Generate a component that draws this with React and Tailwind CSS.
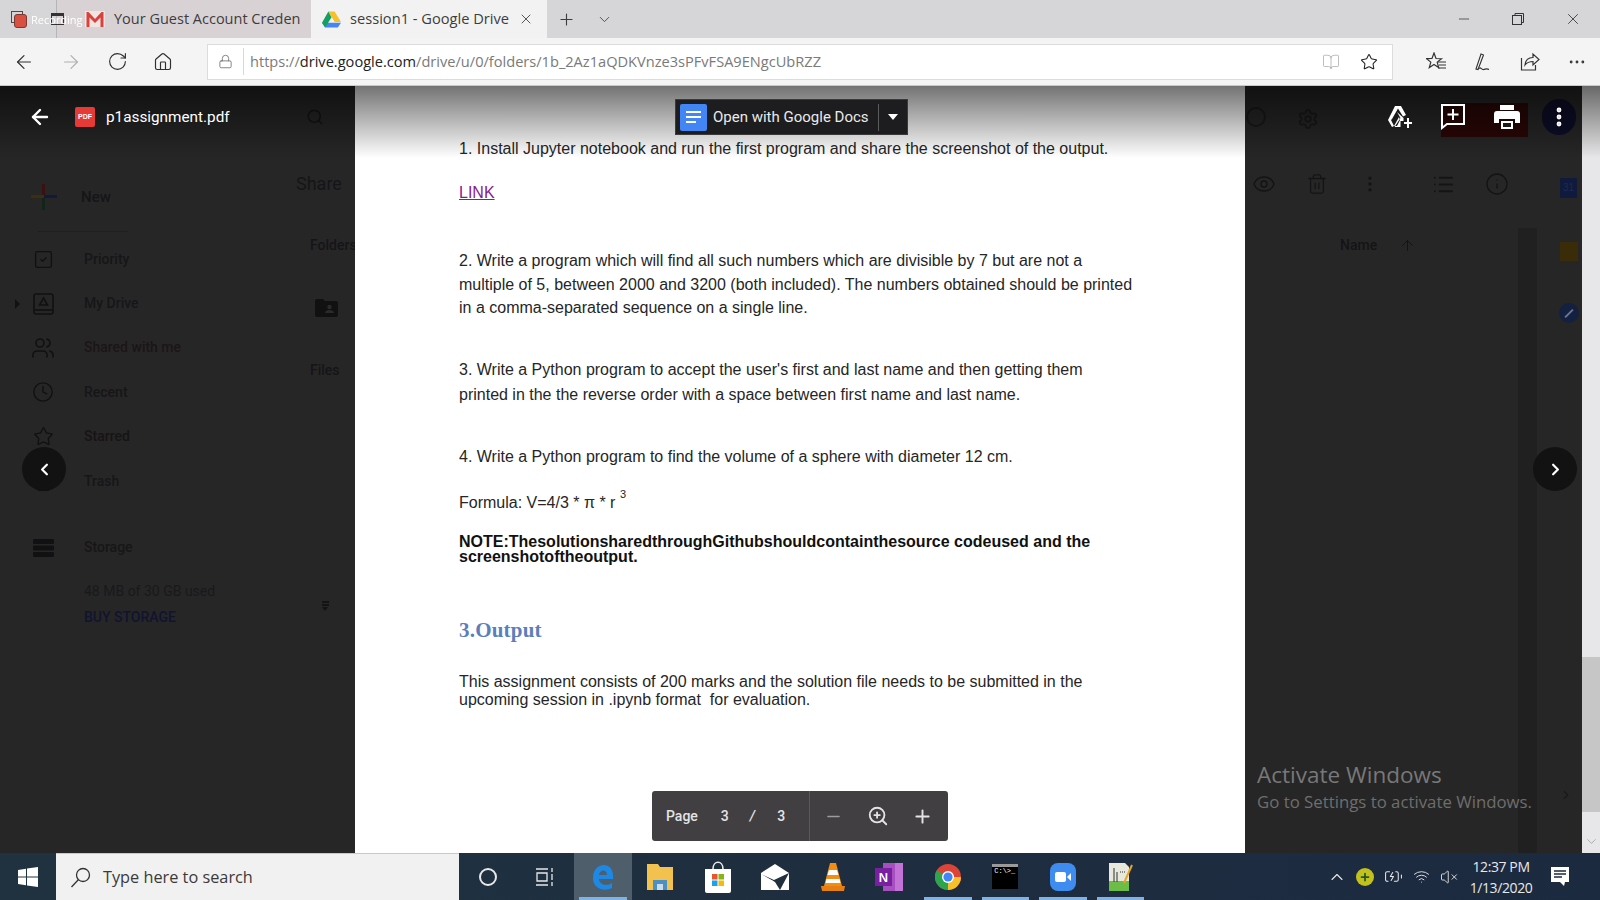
import React from "react";
import {
  ArrowLeft, ArrowRight, RotateCw, Home, Lock, X, Plus, ChevronDown, Minus, Star, BookOpen,
  MoreHorizontal, Eye, Trash2, MoreVertical, List, Info, ArrowUp, Search, Settings, ChevronLeft,
  ChevronRight, ZoomIn, SquareCheck, Users, Clock, ChevronUp, VolumeX, Wifi, BatteryCharging,
} from "lucide-react";

const Drive = ({ size = 20 }) => (
  <svg width={size} height={size} viewBox="0 0 24 22">
    <path d="M8 1h8l8 13h-8z" fill="#f6c028" />
    <path d="M0 15h24l-4 6H4z" fill="#4285f4" />
    <path d="M8 1L0 15l4 6 8-13z" fill="#12a060" />
  </svg>
);

const Gmail = () => (
  <svg width="20" height="16" viewBox="0 0 20 16">
    <rect width="20" height="16" fill="#f3e4e4" />
    <path d="M1.500 16V1h2L10 8l6.500-7h2v15h-3V6.500L10 12 4.500 6.500V16z" fill="#d9423a" />
  </svg>
);

const DocsIcon = () => (
  <div className="w-[27px] h-[27px] bg-[#4285f4] rounded-[2px] flex flex-col justify-center gap-[3px] pl-[6px]">
    <div className="w-[15px] h-[2px] bg-white" />
    <div className="w-[15px] h-[2px] bg-white" />
    <div className="w-[10px] h-[2px] bg-white" />
  </div>
);

const Edge = () => (
  <svg width="24" height="28" viewBox="0 0 24 28">
    <path d="M2 15C2 7 7 2 13 2c6 0 9 5 9 11v3H8c0 5 7 8 13 4v5c-8 4-19 1-19-10zM8 12h8c0-6-7-6-8 0z" fill="#1e88e5" />
  </svg>
);

const Folder = () => (
  <svg width="26" height="30" viewBox="0 0 26 30">
    <path d="M0 2h11l2 3h13v23H0z" fill="#f2c14e" />
    <path d="M6 18h14v10H6z" fill="#4a90c2" />
    <path d="M10 22h6v6h-6z" fill="#c9dceb" />
  </svg>
);

const Store = () => (
  <svg width="28" height="32" viewBox="0 0 28 32">
    <path d="M9 8c0-9 10-9 10 0" fill="none" stroke="#e8e8e8" strokeWidth="1.600" />
    <path d="M1 8h26v22a2 2 0 0 1-2 2H3a2 2 0 0 1-2-2z" fill="#fff" />
    <rect x="8" y="13" width="5.500" height="5.500" fill="#e9552d" />
    <rect x="14.500" y="13" width="5.500" height="5.500" fill="#84b61b" />
    <rect x="8" y="19.500" width="5.500" height="5.500" fill="#1aa3e8" />
    <rect x="14.500" y="19.500" width="5.500" height="5.500" fill="#fab711" />
  </svg>
);

const Mail = () => (
  <svg width="28" height="26" viewBox="0 0 28 26">
    <path d="M0 9L14 0l14 9v17H0z" fill="#fff" />
    <path d="M0 10l13 6 15-7-9 17-5-8z" fill="#20303e" />
    <path d="M0 11l12 6-12 9z" fill="#fff" />
    <path d="M28 11v15h-8z" fill="#fff" />
  </svg>
);

const Vlc = () => (
  <svg width="24" height="30" viewBox="0 0 24 30">
    <path d="M9 1h6l6 23H3z" fill="#f28c12" />
    <path d="M8 8h8l1.500 5h-11zM5.500 17h13l1 4h-15z" fill="#fff" />
    <path d="M0 24h24l-1 5H1z" fill="#e67e10" />
  </svg>
);

const OneNote = () => (
  <svg width="30" height="28" viewBox="0 0 30 28">
    <rect x="8" y="0" width="20" height="28" fill="#a64fbf" />
    <rect x="20" y="0" width="8" height="28" fill="#c373d8" />
    <rect x="0" y="5" width="17" height="18" fill="#7a1fa2" />
    <text x="8.500" y="19" textAnchor="middle" fontSize="13" fontWeight="700" fontFamily="Liberation Sans" fill="#fff">N</text>
  </svg>
);

const Chrome = () => (
  <svg width="26" height="26" viewBox="0 0 26 26">
    <circle cx="13" cy="13" r="13" fill="#dc4437" />
    <path d="M13 13L1.700 6.500A13 13 0 0 0 13 26z" fill="#2da44e" />
    <path d="M13 13h13A13 13 0 0 1 13 26z" fill="#f6c028" />
    <circle cx="13" cy="13" r="6" fill="#fff" />
    <circle cx="13" cy="13" r="4.600" fill="#4285f4" />
  </svg>
);

const Notepad = () => (
  <svg width="26" height="30" viewBox="0 0 26 30">
    <path d="M2 1h16l4 4v24H2z" fill="#e8e8dc" />
    <rect x="2" y="19" width="20" height="10" fill="#6cbd45" />
    <path d="M7 6v14M10 10v10" stroke="#333" strokeWidth="1" />
    <path d="M13 10h5" stroke="#333" strokeWidth="1" strokeDasharray="1 1" />
    <path d="M17 21L25 3" stroke="#e6a529" strokeWidth="2" />
  </svg>
);

const MyDrive = () => (
  <svg width="21" height="22" viewBox="0 0 21 22" fill="none" stroke="currentColor" strokeWidth="1.600">
    <rect x="1" y="1" width="19" height="20" rx="2" />
    <path d="M1 17h19" />
    <path d="M10.500 5l4 7h-8z" />
  </svg>
);

const StorageIcon = () => (
  <svg width="21" height="18" viewBox="0 0 21 18" fill="currentColor">
    <rect width="21" height="5" y="0" rx="1" />
    <rect width="21" height="5" y="6.500" rx="1" />
    <rect width="21" height="5" y="13" rx="1" />
  </svg>
);

const SidebarItem = ({ icon, label, arrow, color = "text-[#161618]" }) => (
  <div className="h-[44.4px] flex items-center relative">
    {arrow && <div className="absolute left-[15px] w-0 h-0 border-y-[5px] border-y-transparent border-l-[5px] border-l-[#121212]" />}
    <div className="w-[84px] pl-[33px] shrink-0 text-[#111113]">{icon}</div>
    <span className={`text-[14px] font-medium font-[Roboto,sans-serif] ${color}`}>{label}</span>
  </div>
);

const TaskIcon = ({ children, active, running }) => (
  <div className={`w-[57.5px] h-full relative flex items-center justify-center shrink-0 ${active ? "bg-[#4e5e6a]" : ""}`}>
    {children}
    {running && <div className="absolute bottom-0 left-[5px] right-[5px] h-[3px] bg-[#7fb3e6]" />}
  </div>
);

export default function App() {
  return (
    <div className="w-[1600px] h-[900px] flex flex-col overflow-hidden relative font-['Liberation_Sans',sans-serif] blur-[0.35px]">
      {/* Tabs */}
      <div className="h-[38px] bg-[#d6d5d8] flex items-stretch shrink-0 font-['Open_Sans',sans-serif] text-[#3d3d3d]">
        <div className="w-[57px] relative flex items-center pl-[11px] border-r border-[#b5b4b7]">
          <div className="relative w-[16px] h-[16px]">
            <div className="absolute left-0 top-0 w-[12px] h-[12px] border border-[#4a4a4a]" />
            <div className="absolute left-[3px] top-[3px] w-[13px] h-[14px] bg-[#d8503f] rounded-[3px] border border-[#7a3a33]" />
          </div>
          <div className="absolute left-[51px] top-[13px] w-[13px] h-[12px] border border-[#333] border-t-[3px]" />
          <span className="absolute left-[31px] top-[12px] text-[11px] text-white whitespace-nowrap z-10">Recording</span>
        </div>
        <div className="w-[254px] flex items-center bg-[#d9d2d4] pl-[28px] gap-[9px]">
          <Gmail />
          <span className="text-[14.5px] whitespace-nowrap">Your Guest Account Creden</span>
        </div>
        <div className="w-[236px] bg-[#f2f2f2] flex items-center pl-[11px]">
          <Drive size={19} />
          <span className="ml-[9px] text-[14.65px] whitespace-nowrap">session1 - Google Drive</span>
          <X size={16} strokeWidth={1.3} className="ml-[9px]" />
        </div>
        <div className="flex items-center pl-[10px] gap-[20px]">
          <Plus size={19} strokeWidth={1.4} />
          <ChevronDown size={17} strokeWidth={1.2} />
        </div>
        <div className="ml-auto flex items-center pr-[18px] gap-[40px]">
          <Minus size={16} strokeWidth={1.2} />
          <svg width="12" height="12" viewBox="0 0 12 12" fill="none" stroke="#333" strokeWidth="1">
            <rect x="0.5" y="2.5" width="9" height="9" />
            <path d="M3 2.500v-2h8.500v9h-2" />
          </svg>
          <X size={18} strokeWidth={1.2} />
        </div>
      </div>

      {/* Toolbar */}
      <div className="h-[48px] bg-[#f4f4f4] flex items-center shrink-0 border-b border-[#c8c8c8] relative">
        <div className="w-[207px] flex items-center pl-[13px] gap-[25px] text-[#2f2f2f]">
          <ArrowLeft size={22} strokeWidth={1.3} />
          <ArrowRight size={22} strokeWidth={1.3} className="text-[#b0b0b0]" />
          <RotateCw size={21} strokeWidth={1.3} />
          <Home size={20} strokeWidth={1.4} />
        </div>
        <div className="w-[1186px] h-[36px] bg-white border border-[#dcdcdc] flex items-center pl-[10px]">
          <Lock size={15} strokeWidth={1.3} className="text-[#6b6b6b]" />
          <div className="w-px h-[27px] bg-[#d8d8d8] ml-[10px]" />
          <span className="ml-[6px] text-[14.6px] text-[#7a7a7a] font-['Open_Sans',sans-serif] whitespace-nowrap">
            https://<span className="text-[#222]">drive.google.com</span>/drive/u/0/folders/1b_2Az1aQDKVnze3sPFvFSA9ENgcUbRZZ
          </span>
          <div className="ml-auto flex items-center gap-[20px] pr-[14px]">
            <BookOpen size={18} strokeWidth={1} className="text-[#a8a8a8]" />
            <Star size={18} strokeWidth={1.4} className="text-[#222]" />
          </div>
        </div>
        <div className="flex items-center pl-[33px] gap-[27px] text-[#333]">
          <svg width="20" height="19" viewBox="0 0 20 19" fill="none" stroke="#333" strokeWidth="1.200">
            <path d="M8 1l2 5.500 5.500.2-4.300 3.400 1.500 5.400L8 12.400l-4.700 3.100 1.500-5.400L.5 6.700 6 6.500z" />
            <path d="M12 10h8M13 13h7M12 16h8" />
          </svg>
          <svg width="20" height="22" viewBox="0 0 20 22" fill="none" stroke="#333" strokeWidth="1.100">
            <path d="M3 18L8 3l2.500 1L5 18.500zM5 18.500c3-4 3 1 6 0s2-1 5 0" />
          </svg>
          <svg width="20" height="19" viewBox="0 0 20 19" fill="none" stroke="#333" strokeWidth="1.200">
            <path d="M1.500 6v12h14v-5" />
            <path d="M5 13c.5-5 4-7.500 8-7.500V2l6 5.500-6 5.500V9.500c-3 0-6 1-8 3.500z" />
          </svg>
          <MoreHorizontal size={20} strokeWidth={1.4} />
        </div>
      </div>

      {/* Main */}
      <div className="flex-1 flex relative min-h-0">
        {/* Drive left, dimmed */}
        <div className="w-[355px] bg-[#262626] shrink-0 flex">
          <div className="w-[296px] shrink-0 flex flex-col">
            <div className="h-[80px] shrink-0" />
            <div className="h-[62px] flex items-center relative shrink-0">
              <div className="relative w-[26px] h-[26px] ml-[31px]">
                <div className="absolute left-[11px] top-0 w-[3px] h-[13px] bg-[#3a1010]" />
                <div className="absolute left-[11px] bottom-0 w-[3px] h-[13px] bg-[#12251a]" />
                <div className="absolute left-0 top-[11px] w-[13px] h-[3px] bg-[#3a300c]" />
                <div className="absolute right-0 top-[11px] w-[13px] h-[3px] bg-[#121a3a]" />
              </div>
              <span className="ml-[24px] text-[15px] font-medium font-[Roboto,sans-serif] text-[#151517]">New</span>
              <div className="absolute left-[38px] bottom-[-4px] w-[90px] h-px bg-[#202020]" />
            </div>
            <div className="h-[9px] shrink-0" />
            <SidebarItem icon={<SquareCheck size={21} strokeWidth={1.5} />} label="Priority" />
            <SidebarItem arrow icon={<MyDrive />} label="My Drive" />
            <SidebarItem icon={<Users size={24} strokeWidth={1.6} className="-ml-[2px]" />} label="Shared with me" color="text-[#1c1516]" />
            <SidebarItem icon={<Clock size={22} strokeWidth={1.5} className="-ml-[1px]" />} label="Recent" />
            <SidebarItem icon={<Star size={21} strokeWidth={1.5} />} label="Starred" color="text-[#171416]" />
            <SidebarItem icon={<Trash2 size={21} strokeWidth={1.5} />} label="Trash" />
            <div className="h-[22px] shrink-0" />
            <SidebarItem icon={<StorageIcon />} label="Storage" />
            <div className="pl-[84px] text-[14px] font-[Roboto,sans-serif] text-[#19191b] mt-[11px] leading-[20px]">48 MB of 30 GB used</div>
            <div className="pl-[84px] text-[14px] font-medium font-[Roboto,sans-serif] text-[#101430] mt-[6px] leading-[20px]">BUY STORAGE</div>
          </div>
          <div className="flex-1 min-w-0 overflow-hidden flex flex-col font-[Roboto,sans-serif] text-[#151517] whitespace-nowrap relative">
            <div className="h-[85px] shrink-0" />
            <div className="text-[18px] leading-[26px]">Share</div>
            <div className="text-[14px] font-medium pl-[14px] mt-[38px] leading-[20px]">Folders</div>
            <div className="pl-[19px] mt-[44px] h-[24px]">
              <svg width="23" height="18" viewBox="0 0 23 18" fill="#111">
                <path d="M0 2a2 2 0 0 1 2-2h6l2 2h11a2 2 0 0 1 2 2v12a2 2 0 0 1-2 2H2a2 2 0 0 1-2-2z" />
                <circle cx="14.500" cy="8" r="2.200" fill="#2b2b2b" />
                <path d="M10 14c0-4 9-4 9 0z" fill="#2b2b2b" />
              </svg>
            </div>
            <div className="text-[14px] font-medium pl-[14px] mt-[37px] leading-[20px]">Files</div>
            <div className="pl-[26px] mt-[221px] text-[#141414]">
              <div className="w-[7px] h-[2px] bg-current mb-[1px]" />
              <div className="w-[7px] h-[2px] bg-current mb-[1px]" />
              <div className="w-0 h-0 border-x-[3.5px] border-x-transparent border-t-[4px] border-t-current" />
            </div>
          </div>
        </div>

        {/* Document */}
        <div className="w-[890px] bg-white shrink-0 pl-[104px] pr-[100px] pt-[53px] text-[16px] text-[#262626]">
          <p className="leading-[20px] whitespace-nowrap">1. Install Jupyter notebook and run the first program and share the screenshot of the output.</p>
          <p className="leading-[20px] mt-[24px] text-[#8a1a92] underline">LINK</p>
          <p className="leading-[23.5px] mt-[46px]">2. Write a program which will find all such numbers which are divisible by 7 but are not a<br />multiple of 5, between 2000 and 3200 (both included). The numbers obtained should be printed<br />in a comma-separated sequence on a single line.</p>
          <p className="leading-[25px] mt-[37px]">3. Write a Python program to accept the user's first and last name and then getting them<br />printed in the the reverse order with a space between first name and last name.</p>
          <p className="leading-[20px] mt-[40px]">4. Write a Python program to find the volume of a sphere with diameter 12 cm.</p>
          <p className="leading-[20px] mt-[26px] relative">Formula: V=4/3 * π * r<span className="absolute left-[161px] top-[-9px] text-[11px]">3</span></p>
          <p className="leading-[15px] mt-[21px] font-bold text-[#111] whitespace-nowrap">NOTE:ThesolutionsharedthroughGithubshouldcontainthesource codeused and the<br />screenshotoftheoutput.</p>
          <p className="leading-[28px] mt-[52px] text-[21px] font-bold text-[#5b7fbd] font-['Liberation_Serif',serif] tracking-[0.2px]">3.Output</p>
          <p className="leading-[18px] mt-[29px]">This assignment consists of 200 marks and the solution file needs to be submitted in the<br />upcoming session in .ipynb format&nbsp; for evaluation.</p>
        </div>

        {/* Drive right, dimmed */}
        <div className="w-[337px] bg-[#262626] shrink-0 flex flex-col relative font-[Roboto,sans-serif] text-[#141416]">
          <div className="h-[60px] shrink-0" />
          <div className="h-[76px] flex items-center pl-[7px] shrink-0">
            <Eye size={24} strokeWidth={1.4} />
            <Trash2 size={22} strokeWidth={1.4} className="ml-[30px]" />
            <MoreVertical size={20} strokeWidth={2} className="ml-[32px]" />
            <List size={23} strokeWidth={2} className="ml-[52px]" />
            <Info size={24} strokeWidth={1.4} className="ml-[30px]" />
          </div>
          <div className="flex items-center pl-[95px] text-[14px] font-medium mt-[13px]">
            Name <ArrowUp size={17} strokeWidth={1.4} className="ml-[22px]" />
          </div>
          <div className="absolute right-[45px] top-[142px] bottom-0 w-[19px] bg-[#202020]" />
          <ChevronRight size={14} className="absolute right-[9px] top-[702px] text-[#191919]" />
        </div>

        {/* Scrollbar */}
        <div className="w-[18px] shrink-0 bg-[#e7e7e9] flex flex-col items-center">
          <div className="h-[571px] shrink-0" />
          <div className="w-full h-[155px] shrink-0 bg-[#c6c6c6]" />
          <ChevronDown size={15} strokeWidth={1} className="mt-[22px] text-[#8a8a8a]" />
        </div>

        {/* Ghost shapes of the page below */}
        <div className="absolute left-[1441px] top-[17px] w-[87px] h-[34px] bg-[#2a0606]" />
        <div className="absolute left-[1542px] top-[13px] w-[34px] h-[36px] rounded-full bg-[#0d0d28]" />
        <div className="absolute left-[1560px] top-[92px] w-[17px] h-[20px] bg-[#101a3c] text-[#1c2a55] text-[10px] text-center leading-[20px]">31</div>
        <div className="absolute left-[1560px] top-[156px] w-[18px] h-[19px] bg-[#3a2c08]" />
        <div className="absolute left-[1559px] top-[217px] w-[20px] h-[20px] rounded-full bg-[#14203f] flex items-center justify-center">
          <div className="w-[2px] h-[11px] bg-[#6d7590] rotate-45" />
        </div>
        <Search size={18} className="absolute left-[306px] top-[22px] text-[#141414]" />
        <div className="absolute left-[1246px] top-[21px] w-[20px] h-[20px] rounded-full border-2 border-[#191919]" />
        <Settings size={22} className="absolute left-[1297px] top-[22px] text-[#191919]" />

        {/* Dim gradient of the viewer's header */}
        <div className="absolute left-0 right-0 top-0 h-[72px] bg-linear-to-b from-black/55 to-transparent pointer-events-none" />

        {/* Viewer header */}
        <div className="absolute left-[28px] top-[19px] flex items-center text-white">
          <ArrowLeft size={24} strokeWidth={2.4} />
          <div className="ml-[23px] w-[20px] h-[20px] bg-[#e53a35] rounded-[2px] flex items-center justify-center text-[7px] font-bold">PDF</div>
          <span className="ml-[11px] text-[15.3px] font-[Roboto,sans-serif]">p1assignment.pdf</span>
        </div>
        <div className="absolute left-[675px] top-[13px] w-[233px] h-[36px] bg-[#1d1d1f] border border-[#3a3a3a] flex items-center pl-[4px]">
          <DocsIcon />
          <span className="ml-[6px] text-[15px] text-[#eaeaea] font-[Roboto,sans-serif] whitespace-nowrap">Open with Google Docs</span>
          <div className="ml-[9px] w-px h-[27px] bg-[#5b5b5b]" />
          <div className="ml-[9px] w-0 h-0 border-x-[5px] border-x-transparent border-t-[6px] border-t-white" />
        </div>
        <div className="absolute left-[1387px] top-[17px] flex items-center text-white">
          <svg width="26" height="24" viewBox="0 0 26 24" fill="white">
            <path d="M8 1h6l5 9-3 1.500L11 3.500 5 14l-1 1 3 6-2 1-4-7z" />
            <path d="M10 7l3.500 6-6 9h6v-6h3v-3zM7 21l5-9 1 3-3 6z" />
            <path d="M20 13h2v4h3v2h-3v4h-2v-4h-3v-2h3z" />
          </svg>
          <svg width="26" height="27" viewBox="0 0 26 27" fill="none" stroke="white" strokeWidth="2" className="ml-[27px]">
            <path d="M2 2h22v19H7l-5 4z" />
            <path d="M13 6v11M7.500 11.500h11" />
          </svg>
          <svg width="26" height="24" viewBox="0 0 26 24" fill="white" className="ml-[28px]">
            <path d="M6 0h14v5H6z" />
            <path d="M3 6h20a3 3 0 0 1 3 3v9h-5v-4H5v4H0V9a3 3 0 0 1 3-3z" />
            <path d="M7 16h12v8H7z" />
            <path d="M9 18h8v4H9z" fill="#1a1a1a" />
          </svg>
          <MoreVertical size={24} strokeWidth={2.8} className="ml-[27px]" />
        </div>

        {/* Prev / next */}
        <div className="absolute left-[22px] top-[361px] w-[44px] h-[44px] rounded-full bg-[#121212] flex items-center justify-center text-white">
          <ChevronLeft size={19} strokeWidth={2.8} />
        </div>
        <div className="absolute left-[1533px] top-[361px] w-[44px] h-[44px] rounded-full bg-[#121212] flex items-center justify-center text-white">
          <ChevronRight size={19} strokeWidth={2.8} />
        </div>

        {/* Page control */}
        <div className="absolute left-[652px] top-[705px] w-[296px] h-[50px] bg-[#423f42] rounded-[3px] flex items-center text-[#e4e4e4] font-[Roboto,sans-serif] text-[14px] font-medium">
          <div className="w-[158px] h-full border-r border-[#5c595c] flex items-center pl-[14px]">
            <span>Page</span>
            <span className="ml-[23px]">3</span>
            <span className="ml-[21px] italic">/</span>
            <span className="ml-[22px]">3</span>
          </div>
          <Minus size={19} strokeWidth={2} className="ml-[14px] text-[#9d9b9d]" />
          <ZoomIn size={22} strokeWidth={2} className="ml-[24px]" />
          <Plus size={21} strokeWidth={2.2} className="ml-[23px]" />
        </div>

        {/* Activation watermark */}
        <div className="absolute left-[1257px] top-[673px] text-[#787878] font-['Open_Sans',sans-serif]">
          <div className="text-[22.5px] leading-[32px] whitespace-nowrap">Activate Windows</div>
          <div className="text-[16.8px] leading-[22px] whitespace-nowrap text-[#6e6e6e]">Go to Settings to activate Windows.</div>
        </div>
      </div>

      {/* Taskbar */}
      <div className="h-[47px] shrink-0 bg-linear-to-r from-[#20323f] to-[#1c2a40] flex items-stretch font-['Open_Sans',sans-serif]">
        <div className="w-[56px] flex items-center justify-center">
          <svg width="20" height="20" viewBox="0 0 20 20" fill="white">
            <path d="M0 3l8-1.200V9.500H0zM9 1.600L20 0v9.500H9zM0 10.500h8v7.700L0 17zM9 10.500h11V20L9 18.400z" />
          </svg>
        </div>
        <div className="w-[403px] bg-[#f1f1f1] border-t border-[#c9c9c9] flex items-center pl-[14px] text-[#3a3a3a]">
          <svg width="21" height="21" viewBox="0 0 21 21" fill="none" stroke="#333" strokeWidth="1.300">
            <circle cx="13" cy="8" r="6.500" />
            <path d="M8.500 12.500L1.500 20" />
          </svg>
          <span className="ml-[12px] text-[16.3px]">Type here to search</span>
        </div>
        <div className="flex items-stretch">
          <TaskIcon><div className="w-[18px] h-[18px] rounded-full border-[2.5px] border-[#e8e8e8]" /></TaskIcon>
          <TaskIcon>
            <svg width="20" height="20" viewBox="0 0 20 20" fill="none" stroke="#e8e8e8" strokeWidth="1.300">
              <path d="M1 2h12M1 18h12M2 6h10v8H2zM17 1v4M17 7v6M17 15v4" />
            </svg>
          </TaskIcon>
          <TaskIcon active running><Edge /></TaskIcon>
          <TaskIcon><Folder /></TaskIcon>
          <TaskIcon><Store /></TaskIcon>
          <TaskIcon><Mail /></TaskIcon>
          <TaskIcon><Vlc /></TaskIcon>
          <TaskIcon><OneNote /></TaskIcon>
          <TaskIcon running><Chrome /></TaskIcon>
          <TaskIcon running>
            <div className="w-[26px] h-[25px] bg-black border-t-[3px] border-[#9a9a9a] text-[7px] leading-[8px] text-white font-['Liberation_Mono',monospace] pl-[2px]">C:\&gt;_</div>
          </TaskIcon>
          <TaskIcon running>
            <div className="w-[26px] h-[28px] bg-[#3f8cf0] rounded-[8px] flex items-center justify-center gap-[1px]">
              <div className="w-[11px] h-[10px] bg-white rounded-[2px]" />
              <div className="w-0 h-0 border-y-[4px] border-y-transparent border-r-[4px] border-r-white" />
            </div>
          </TaskIcon>
          <TaskIcon running><Notepad /></TaskIcon>
        </div>
        <div className="ml-[174px] flex items-center text-[#e8e8e8]">
          <div className="w-[28px] flex justify-center"><ChevronUp size={20} strokeWidth={1.3} /></div>
          <div className="w-[28px] flex justify-center">
            <div className="w-[18px] h-[18px] rounded-full bg-[#c3c21c] flex items-center justify-center"><Plus size={12} strokeWidth={3.5} className="text-[#22562a]" /></div>
          </div>
          <div className="w-[28px] flex justify-center"><BatteryCharging size={19} strokeWidth={1.3} /></div>
          <div className="w-[28px] flex justify-center"><Wifi size={17} strokeWidth={1.3} /></div>
          <div className="w-[28px] flex justify-center"><VolumeX size={18} strokeWidth={1.2} /></div>
          <div className="w-[76px] flex flex-col items-center text-[14px] leading-[21px] tracking-[-0.4px]">
            <span>12:37 PM</span>
            <span>1/13/2020</span>
          </div>
          <div className="w-[42px] flex justify-center">
            <svg width="20" height="22" viewBox="0 0 20 22" fill="white">
              <path d="M1 1h18v15h-4l-1 4-4-4H1z" />
              <path d="M4 5h12M4 8h12M4 11h8" stroke="#1c2a40" strokeWidth="1.300" />
            </svg>
          </div>
        </div>
      </div>
    </div>
  );
}
